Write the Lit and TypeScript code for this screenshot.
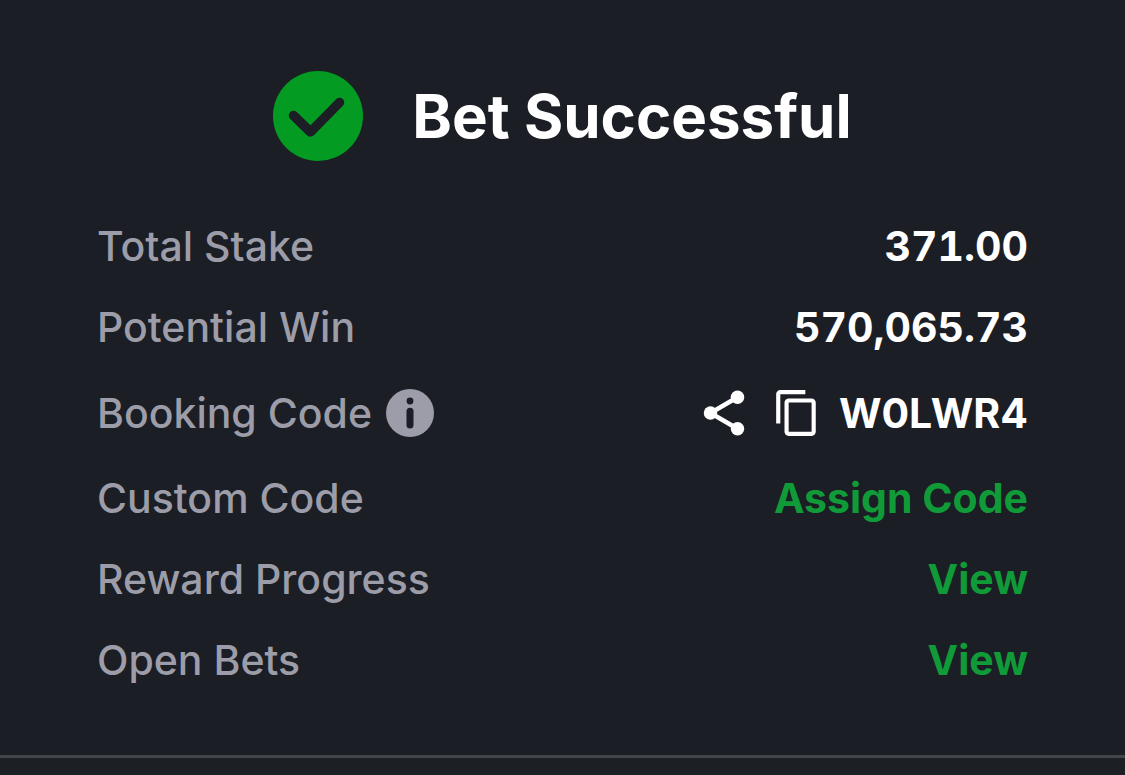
import { LitElement, html, css } from "lit";
import { customElement } from "lit/decorators.js";

@customElement("app-root")
export class AppRoot extends LitElement {
  static styles = css`
    :host {
      display: block;
      min-height: 100vh;
      box-sizing: border-box;
      background: #1c1f24;
      color: #fff;
      font-family: Inter, "Liberation Sans", sans-serif;
    }
    .receipt {
      padding: 68px 97px 54px;
      background: #1b1e25;
      border-bottom: 3px solid #43454c;
    }
    .header {
      display: flex;
      align-items: center;
      justify-content: center;
      gap: 49px;
      min-height: 96px;
    }
    .check {
      width: 90px;
      height: 90px;
      flex: none;
    }
    h1 {
      margin: 0;
      font-size: 60px;
      line-height: 72px;
      font-weight: 700;
    }
    .details {
      margin: 42px 0 0;
      font-size: 41px;
      line-height: 51px;
    }
    .row {
      display: flex;
      align-items: center;
      justify-content: space-between;
      padding: 15px 0;
    }
    .tall {
      min-height: 60px;
    }
    dt,
    dd {
      margin: 0;
      display: flex;
      align-items: center;
    }
    dt {
      color: #9c9da9;
      font-weight: 500;
      gap: 14px;
    }
    dd {
      font-weight: 700;
    }
    .amount {
      font-variant-numeric: tabular-nums;
    }
    button {
      border: 0;
      padding: 0;
      background: none;
      color: inherit;
      display: flex;
      cursor: pointer;
    }
    a {
      color: #109a38;
      text-decoration: none;
    }
    svg {
      display: block;
    }
    .info {
      width: 48px;
      height: 48px;
    }
    .share {
      width: 54px;
      height: 54px;
    }
    .copy {
      width: 50px;
      height: 50px;
    }
    .actions {
      display: flex;
      align-items: center;
      gap: 21px;
      margin-right: 17px;
    }
  `;

  render() {
    return html`
      <main class="receipt">
        <header class="header">
          <svg class="check" viewBox="0 0 90 90" aria-hidden="true">
            <circle cx="45" cy="45" r="45" fill="#039b22" />
            <path d="M20.5 44.5 37.5 61 66.5 31.5" fill="none" stroke="#1b1e25" stroke-width="9.5" stroke-linecap="round" stroke-linejoin="round" />
          </svg>
          <h1>Bet Successful</h1>
        </header>
        <dl class="details">
          <div class="row"><dt>Total Stake</dt><dd class="amount">371.00</dd></div>
          <div class="row"><dt>Potential Win</dt><dd class="amount">570,065.73</dd></div>
          <div class="row tall">
            <dt>
              Booking Code
              <button type="button" aria-label="About booking codes">
                <svg class="info" viewBox="0 0 48 48" aria-hidden="true">
                  <circle cx="24" cy="24" r="24" fill="#9c9da9" />
                  <circle cx="24" cy="12" r="3.4" fill="#1b1e25" />
                  <path d="M24 22.3V36" stroke="#1b1e25" stroke-width="7" stroke-linecap="round" />
                </svg>
              </button>
            </dt>
            <dd>
              <div class="actions">
                <button type="button" aria-label="Share">
                  <svg class="share" viewBox="0 0 24 24" fill="currentColor" aria-hidden="true">
                    <path d="M18 5 6 12l12 7" fill="none" stroke="currentColor" stroke-width="2" />
                    <circle cx="18" cy="5" r="3" />
                    <circle cx="6" cy="12" r="3" />
                    <circle cx="18" cy="19" r="3" />
                  </svg>
                </button>
                <button type="button" aria-label="Copy">
                  <svg class="copy" viewBox="0 0 24 24" fill="currentColor" aria-hidden="true">
                    <path d="M16 1H4c-1.1 0-2 .9-2 2v14h2V3h12V1zm3 4H8c-1.1 0-2 .9-2 2v14c0 1.1.9 2 2 2h11c1.1 0 2-.9 2-2V7c0-1.1-.9-2-2-2zm0 16H8V7h11v14z" />
                  </svg>
                </button>
              </div>
              <span>W0LWR4</span>
            </dd>
          </div>
          <div class="row"><dt>Custom Code</dt><dd><a href="#assign">Assign Code</a></dd></div>
          <div class="row"><dt>Reward Progress</dt><dd><a href="#reward">View</a></dd></div>
          <div class="row"><dt>Open Bets</dt><dd><a href="#bets">View</a></dd></div>
        </dl>
      </main>
    `;
  }
}
